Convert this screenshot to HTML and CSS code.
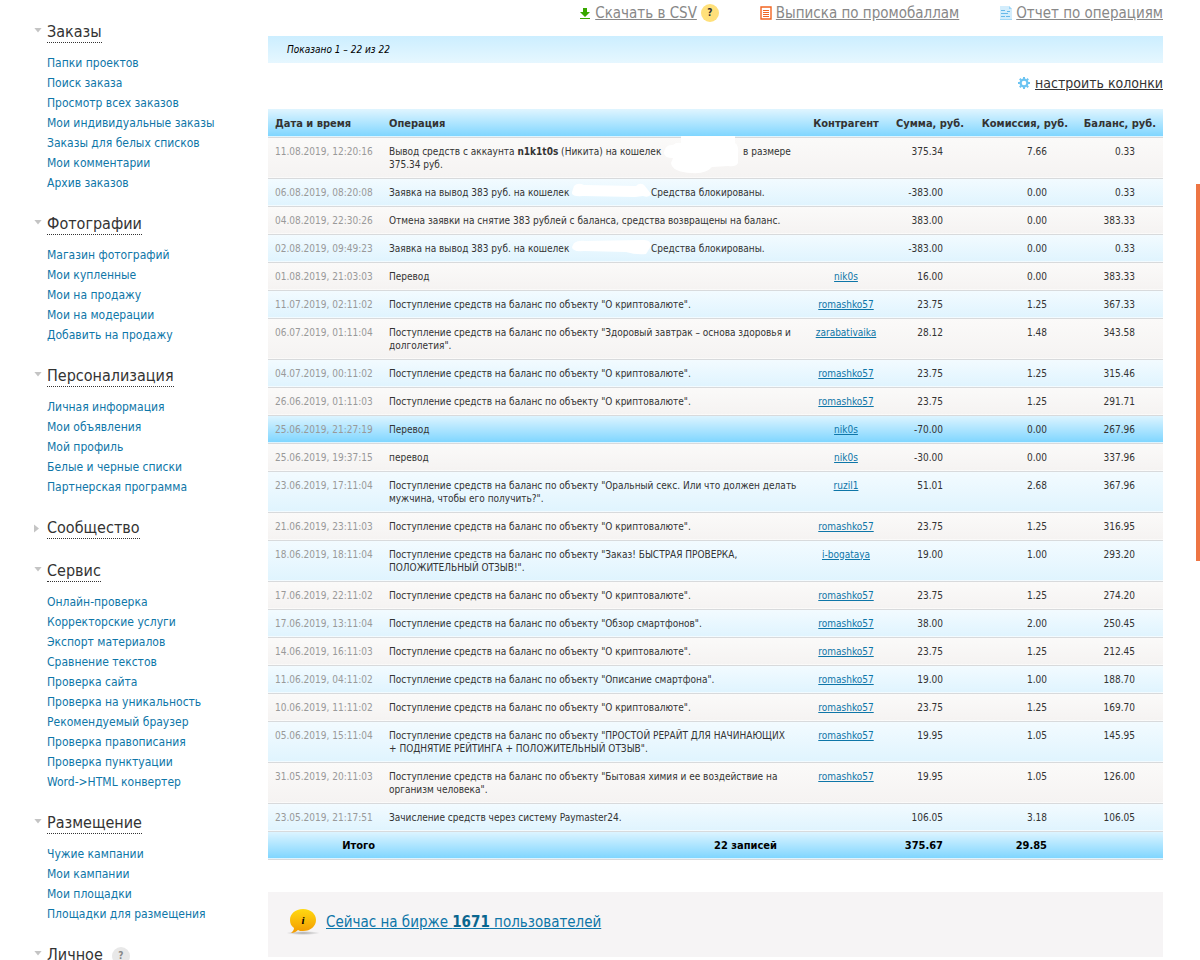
FILE: index.html
```html
<!DOCTYPE html>
<html lang="ru">
<head>
	<meta charset="UTF-8">
	<title>История операций</title>
	<link rel="stylesheet" href="styles.css">
</head>
<body>
	<div class="wrap">
		<nav class="sidebar">
			<div class="group">
				<h2 class="open"><a href="#">Заказы</a></h2>
				<ul>
					<li><a href="#">Папки проектов</a></li>
					<li><a href="#">Поиск заказа</a></li>
					<li><a href="#">Просмотр всех заказов</a></li>
					<li><a href="#">Мои индивидуальные заказы</a></li>
					<li><a href="#">Заказы для белых списков</a></li>
					<li><a href="#">Мои комментарии</a></li>
					<li><a href="#">Архив заказов</a></li>
				</ul>
			</div>
			<div class="group">
				<h2 class="open"><a href="#">Фотографии</a></h2>
				<ul>
					<li><a href="#">Магазин фотографий</a></li>
					<li><a href="#">Мои купленные</a></li>
					<li><a href="#">Мои на продажу</a></li>
					<li><a href="#">Мои на модерации</a></li>
					<li><a href="#">Добавить на продажу</a></li>
				</ul>
			</div>
			<div class="group">
				<h2 class="open"><a href="#">Персонализация</a></h2>
				<ul>
					<li><a href="#">Личная информация</a></li>
					<li><a href="#">Мои объявления</a></li>
					<li><a href="#">Мой профиль</a></li>
					<li><a href="#">Белые и черные списки</a></li>
					<li><a href="#">Партнерская программа</a></li>
				</ul>
			</div>
			<div class="group">
				<h2 class="closed"><a href="#">Сообщество</a></h2>
			</div>
			<div class="group">
				<h2 class="open"><a href="#">Сервис</a></h2>
				<ul>
					<li><a href="#">Онлайн-проверка</a></li>
					<li><a href="#">Корректорские услуги</a></li>
					<li><a href="#">Экспорт материалов</a></li>
					<li><a href="#">Сравнение текстов</a></li>
					<li><a href="#">Проверка сайта</a></li>
					<li><a href="#">Проверка на уникальность</a></li>
					<li><a href="#">Рекомендуемый браузер</a></li>
					<li><a href="#">Проверка правописания</a></li>
					<li><a href="#">Проверка пунктуации</a></li>
					<li><a href="#">Word-&gt;HTML конвертер</a></li>
				</ul>
			</div>
			<div class="group">
				<h2 class="open"><a href="#">Размещение</a></h2>
				<ul>
					<li><a href="#">Чужие кампании</a></li>
					<li><a href="#">Мои кампании</a></li>
					<li><a href="#">Мои площадки</a></li>
					<li><a href="#">Площадки для размещения</a></li>
				</ul>
			</div>
			<div class="group">
				<h2 class="open"><a href="#">Личное</a> <button type="button" class="help gray">?</button></h2>
			</div>
		</nav>

		<main class="content">
			<div class="exports">
				<div class="export">
					<svg width="12" height="12" viewBox="0 0 12 12"><path d="M4 1h4v4h3l-5 5-5-5h3z" fill="#38a800"/><path d="M1 11h10v1H1z" fill="#38a800"/></svg>
					<a href="#">Скачать в CSV</a>
					<button type="button" class="help">?</button>
				</div>
				<div class="export">
					<svg width="12" height="14" viewBox="0 0 12 14"><path d="M1 1h10v12H1z" fill="#fff" stroke="#f26522" stroke-width="1.4"/><path d="M3 4.5h6M3 6.5h6M3 8.5h6M3 10.5h6" stroke="#f26522"/></svg>
					<a href="#">Выписка по промобаллам</a>
				</div>
				<div class="export">
					<svg width="12" height="14" viewBox="0 0 12 14"><path d="M0 0h9l3 3v11H0z" fill="#d3edfc"/><path d="M9 0v3h3z" fill="#9bd4f6"/><path d="M1 4.5h4M1 7.5h7M1 10.5h4M6 10.5h4M7 5.5h3" stroke="#67b9ea"/><path d="M0 13h12v1H0z" fill="#a4d8f5"/></svg>
					<a href="#">Отчет по операциям</a>
				</div>
			</div>

			<div class="shown">Показано 1 – 22 из 22</div>

			<div class="columns">
				<svg width="12" height="12" viewBox="0 0 12 12"><circle cx="6" cy="6" r="3.4" fill="none" stroke="#6cc4f2" stroke-width="2.2"/><path d="M6 0v2M6 10v2M0 6h2M10 6h2M1.8 1.8l1.4 1.4M8.8 8.8l1.4 1.4M1.8 10.2l1.4-1.4M8.8 3.2l1.4-1.4" stroke="#6cc4f2" stroke-width="2"/></svg>
				<a href="#">настроить колонки</a>
			</div>

			<table class="operations">
				<thead>
					<tr>
						<th class="date">Дата и время</th>
						<th class="operation">Операция</th>
						<th class="partner">Контрагент</th>
						<th class="sum">Сумма, руб.</th>
						<th class="fee">Комиссия, руб.</th>
						<th class="balance">Баланс, руб.</th>
					</tr>
				</thead>
				<tbody>
					<tr><td>11.08.2019, 12:20:16</td><td>Вывод средств с аккаунта <b>n1k1t0s</b> (Никита) на кошелек <span class="wallet"><svg class="blot tall" width="78" height="38" viewBox="0 0 78 38"><path d="M17 0h54v7q4 2 3 12v8q-2 4-10 3l-16 1q-6 7-20 6Q8 36 7 27l2-5Q0 22 0 17 1 8 9 9q3-3 8-2z" fill="#fff"/></svg></span> в размере 375.34 руб.</td><td></td><td>375.34</td><td>7.66</td><td>0.33</td></tr>
					<tr><td>06.08.2019, 08:20:08</td><td>Заявка на вывод 383 руб. на кошелек <span class="wallet"><svg class="blot" width="80" height="16" viewBox="0 0 80 16"><path d="M2 3q4-4 10-1l52 1q4-4 8-1l4 5 3 4q-2 4-8 2l-8 1-52-1q-12 1-11-4z" fill="#fff"/></svg></span> Средства блокированы.</td><td></td><td>-383.00</td><td>0.00</td><td>0.33</td></tr>
					<tr><td>04.08.2019, 22:30:26</td><td>Отмена заявки на снятие 383 рублей с баланса, средства возвращены на баланс.</td><td></td><td>383.00</td><td>0.00</td><td>383.33</td></tr>
					<tr><td>02.08.2019, 09:49:23</td><td>Заявка на вывод 383 руб. на кошелек <span class="wallet"><svg class="blot" width="80" height="16" viewBox="0 0 80 16"><path d="M2 4q4-3 12-2l58-1q7 0 7 6l-5 8q-10 1-20-2l-42-1q-12 1-12-4z" fill="#fff"/></svg></span> Средства блокированы.</td><td></td><td>-383.00</td><td>0.00</td><td>0.33</td></tr>
					<tr><td>01.08.2019, 21:03:03</td><td>Перевод</td><td><a href="#">nik0s</a></td><td>16.00</td><td>0.00</td><td>383.33</td></tr>
					<tr><td>11.07.2019, 02:11:02</td><td>Поступление средств на баланс по объекту "О криптовалюте".</td><td><a href="#">romashko57</a></td><td>23.75</td><td>1.25</td><td>367.33</td></tr>
					<tr><td>06.07.2019, 01:11:04</td><td>Поступление средств на баланс по объекту "Здоровый завтрак – основа здоровья и долголетия".</td><td><a href="#">zarabativaika</a></td><td>28.12</td><td>1.48</td><td>343.58</td></tr>
					<tr><td>04.07.2019, 00:11:02</td><td>Поступление средств на баланс по объекту "О криптовалюте".</td><td><a href="#">romashko57</a></td><td>23.75</td><td>1.25</td><td>315.46</td></tr>
					<tr><td>26.06.2019, 01:11:03</td><td>Поступление средств на баланс по объекту "О криптовалюте".</td><td><a href="#">romashko57</a></td><td>23.75</td><td>1.25</td><td>291.71</td></tr>
					<tr class="current"><td>25.06.2019, 21:27:19</td><td>Перевод</td><td><a href="#">nik0s</a></td><td>-70.00</td><td>0.00</td><td>267.96</td></tr>
					<tr><td>25.06.2019, 19:37:15</td><td>перевод</td><td><a href="#">nik0s</a></td><td>-30.00</td><td>0.00</td><td>337.96</td></tr>
					<tr><td>23.06.2019, 17:11:04</td><td>Поступление средств на баланс по объекту "Оральный секс. Или что должен делать мужчина, чтобы его получить?".</td><td><a href="#">ruzil1</a></td><td>51.01</td><td>2.68</td><td>367.96</td></tr>
					<tr><td>21.06.2019, 23:11:03</td><td>Поступление средств на баланс по объекту "О криптовалюте".</td><td><a href="#">romashko57</a></td><td>23.75</td><td>1.25</td><td>316.95</td></tr>
					<tr><td>18.06.2019, 18:11:04</td><td>Поступление средств на баланс по объекту "Заказ! БЫСТРАЯ ПРОВЕРКА, ПОЛОЖИТЕЛЬНЫЙ ОТЗЫВ!".</td><td><a href="#">i-bogataya</a></td><td>19.00</td><td>1.00</td><td>293.20</td></tr>
					<tr><td>17.06.2019, 22:11:02</td><td>Поступление средств на баланс по объекту "О криптовалюте".</td><td><a href="#">romashko57</a></td><td>23.75</td><td>1.25</td><td>274.20</td></tr>
					<tr><td>17.06.2019, 13:11:04</td><td>Поступление средств на баланс по объекту "Обзор смартфонов".</td><td><a href="#">romashko57</a></td><td>38.00</td><td>2.00</td><td>250.45</td></tr>
					<tr><td>14.06.2019, 16:11:03</td><td>Поступление средств на баланс по объекту "О криптовалюте".</td><td><a href="#">romashko57</a></td><td>23.75</td><td>1.25</td><td>212.45</td></tr>
					<tr><td>11.06.2019, 04:11:02</td><td>Поступление средств на баланс по объекту "Описание смартфона".</td><td><a href="#">romashko57</a></td><td>19.00</td><td>1.00</td><td>188.70</td></tr>
					<tr><td>10.06.2019, 11:11:02</td><td>Поступление средств на баланс по объекту "О криптовалюте".</td><td><a href="#">romashko57</a></td><td>23.75</td><td>1.25</td><td>169.70</td></tr>
					<tr><td>05.06.2019, 15:11:04</td><td>Поступление средств на баланс по объекту "ПРОСТОЙ РЕРАЙТ ДЛЯ НАЧИНАЮЩИХ +&nbsp;ПОДНЯТИЕ РЕЙТИНГА + ПОЛОЖИТЕЛЬНЫЙ ОТЗЫВ".</td><td><a href="#">romashko57</a></td><td>19.95</td><td>1.05</td><td>145.95</td></tr>
					<tr><td>31.05.2019, 20:11:03</td><td>Поступление средств на баланс по объекту "Бытовая химия и ее воздействие на организм человека".</td><td><a href="#">romashko57</a></td><td>19.95</td><td>1.05</td><td>126.00</td></tr>
					<tr><td>23.05.2019, 21:17:51</td><td>Зачисление средств через систему Paymaster24.</td><td></td><td>106.05</td><td>3.18</td><td>106.05</td></tr>
				</tbody>
				<tfoot>
					<tr><td>Итого</td><td>22 записей</td><td></td><td>375.67</td><td>29.85</td><td></td></tr>
				</tfoot>
			</table>

			<div class="online">
				<svg width="34" height="28" viewBox="0 0 34 28">
					<defs>
						<linearGradient id="bubble" x1="0" y1="0" x2="0" y2="1"><stop offset="0" stop-color="#ffd911"/><stop offset="1" stop-color="#f39a00"/></linearGradient>
						<radialGradient id="shade"><stop offset="0" stop-color="#aaa"/><stop offset="1" stop-color="#aaa" stop-opacity="0"/></radialGradient>
					</defs>
					<ellipse cx="17" cy="25" rx="17" ry="2" fill="url(#shade)"/>
					<path d="M17 1c8 0 13 5 13 11s-5 11-13 11c-2 0-4 0-5-1-2 2-4 3-7 3 2-2 3-3 3-5-3-2-4-5-4-8C4 6 9 1 17 1z" fill="url(#bubble)"/>
					<text x="17" y="16" class="bubble-mark">i</text>
				</svg>
				<a href="#">Сейчас на бирже <b>1671</b> пользователей</a>
			</div>
		</main>
	</div>
	<div class="edge"></div>
</body>
</html>
```
FILE: styles.css
```css
*{margin:0;padding:0;box-sizing:border-box;}
body{
	background:#fff;
	color:#333;
	font-family:Tahoma, "DejaVu Sans Condensed", "DejaVu Sans", sans-serif;
	font-size:12px;
}
li{list-style:none;}
a{color:#0e76a8;}
svg{flex:none;}
.wrap{
	display:flex;
	height:100vh;
	overflow:hidden;
}

/* левое меню */
.sidebar{
	flex:none;
	width:268px;
	padding:21px 0 0 34px;
}
.group{margin-bottom:20px;}
.group h2{
	display:flex;
	align-items:center;
	height:23px;
	font-size:16px;
	font-weight:normal;
	line-height:20px;
}
.group h2:before{
	content:"";
	width:13px;
	height:10px;
	background:#c4c4c4;
}
.group h2.open:before{clip-path:polygon(0 0,8px 0,4px 5px);}
.group h2.closed:before{clip-path:polygon(0 1px,5px 5px,0 9px);}
.group h2 a{
	color:#333;
	text-decoration:none;
	border-bottom:1px dotted #333;
}
.group ul{
	margin-top:9px;
	padding-left:13px;
}
.group li{line-height:20px;}
.group li a{text-decoration:none;}

.help{
	width:18px;
	height:18px;
	border:0;
	border-radius:50%;
	background:#ffe07a;
	color:#333;
	font:bold 10px/18px "DejaVu Sans Condensed", sans-serif;
	text-align:center;
}
.help.gray{
	margin-left:9px;
	background:#e8e8e8;
	color:#888;
}

/* правая часть */
.content{
	flex:1;
	min-width:0;
	padding-right:37px;
}
.exports{
	display:flex;
	justify-content:flex-end;
	gap:41px;
	height:36px;
	padding-top:2px;
	font-size:15px;
}
.export{
	display:flex;
	align-items:center;
	gap:4px;
	height:22px;
}
.export a{color:#888;}
.shown{
	height:27px;
	padding-left:19px;
	background:linear-gradient(#cceeff,#e6f7ff);
	color:#000;
	font-size:10px;
	font-style:italic;
	line-height:27px;
}
.columns{
	display:flex;
	align-items:center;
	justify-content:flex-end;
	gap:5px;
	height:46px;
	padding-bottom:6px;
	font-size:14px;
}
.columns a{color:#333;}

.operations{
	width:100%;
	table-layout:fixed;
	border-collapse:collapse;
	font-size:10px;
	line-height:13px;
}
.operations tr{
	background:linear-gradient(#fbfaf9,#f5f3f2);
	border-bottom:1px solid #d8dadc;
}
.operations tbody tr:nth-child(even){background:linear-gradient(#f3fbff,#e0f4fe);}
.operations thead tr,
.operations tfoot tr,
.operations tbody tr.current{background:linear-gradient(#e0f5ff,#80d6ff);}
.operations th{
	height:28px;
	padding:2px 7px 0;
	font-size:11px;
	text-align:right;
	white-space:nowrap;
}
.operations th.date,
.operations th.operation{text-align:left;}
.operations th.partner{text-align:center;}
.date{width:114px;}
.partner{width:82px;}
.sum{width:84px;}
.fee{width:104px;}
.balance{width:88px;}
.operations td{
	padding:7px 28px 7px 0;
	text-align:right;
	vertical-align:top;
}
.operations td:nth-child(1){
	padding:7px;
	color:#999;
	text-align:left;
	white-space:nowrap;
}
.operations td:nth-child(2){
	padding:7px;
	text-align:left;
}
.operations td:nth-child(3){
	padding:7px 0;
	text-align:center;
}
.operations tfoot td,
.operations tfoot td:nth-child(1),
.operations tfoot td:nth-child(2){
	color:#000;
	font-size:11px;
	font-weight:bold;
	text-align:right;
}
.operations tfoot td:nth-child(2){padding-right:28px;}

/* закрашенный номер кошелька */
.wallet{
	display:inline-block;
	position:relative;
	width:76px;
	height:10px;
}
.blot{
	position:absolute;
	top:-3px;
	left:0;
}
.blot.tall{top:-9px;}

.online{
	display:flex;
	align-items:center;
	gap:6px;
	height:65px;
	margin-top:32px;
	padding:0 0 4px 18px;
	background:#f6f4f5;
	font-size:15px;
}
.online b{color:#0a668f;}
.bubble-mark{
	font:italic bold 11px "Liberation Serif", serif;
	text-anchor:middle;
}
.edge{
	position:fixed;
	top:184px;
	right:0;
	width:4px;
	height:377px;
	background:#ee7544;
}
```
